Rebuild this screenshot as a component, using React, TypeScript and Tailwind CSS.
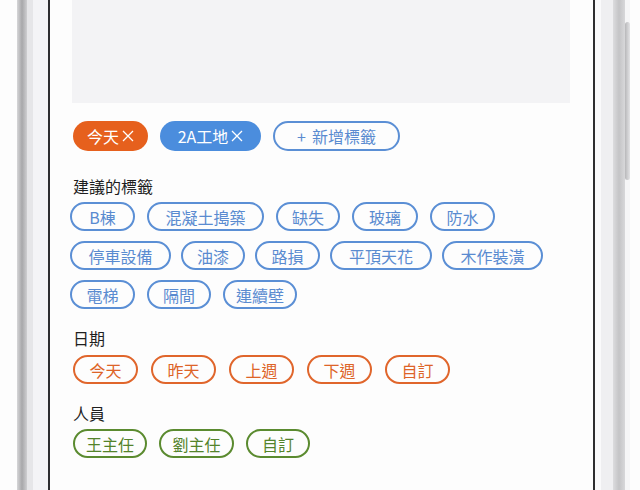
import React from "react";

type Tone = "blue" | "orange" | "green";

const toneClass: Record<Tone, string> = {
  blue: "border-[#5b8fd5] text-[#5a8bd0]",
  orange: "border-[#e0662c] text-[#dd6428]",
  green: "border-[#5b8b30] text-[#54832b]"
};

const suggested: { label: string; w: string }[][] = [
  [
    { label: "B棟", w: "w-[65px]" },
    { label: "混凝土搗築", w: "w-[117px]" },
    { label: "缺失", w: "w-[64px]" },
    { label: "玻璃", w: "w-[66px]" },
    { label: "防水", w: "w-[65px]" }
  ],
  [
    { label: "停車設備", w: "w-[101px]" },
    { label: "油漆", w: "w-[64px]" },
    { label: "路損", w: "w-[65px]" },
    { label: "平頂天花", w: "w-[102px]" },
    { label: "木作裝潢", w: "w-[101px]" }
  ],
  [
    { label: "電梯", w: "w-[65px]" },
    { label: "隔間", w: "w-[64px]" },
    { label: "連續壁", w: "w-[74px]" }
  ]
];

const dates = ["今天", "昨天", "上週", "下週", "自訂"];

const people = [
  { label: "王主任", w: "w-[74px]" },
  { label: "劉主任", w: "w-[75px]" },
  { label: "自訂", w: "w-[64px]" }
];

function Pill({ label, tone, w }: { label: string; tone: Tone; w: string }) {
  return (
    <div
      className={`flex h-[29px] ${w} shrink-0 items-center justify-center rounded-full border-2 text-[16px] ${toneClass[tone]}`}
    >
      {label}
    </div>
  );
}

function Cross() {
  return (
    <svg width="12" height="12" viewBox="0 0 12 12" className="ml-[3px]">
      <path d="M1 1L11 11M11 1L1 11" stroke="white" strokeWidth="1.3" />
    </svg>
  );
}

function Label({ children }: { children: React.ReactNode }) {
  return <p className="h-5 text-[16px] leading-5 text-[#1f1f1f]">{children}</p>;
}

export default function App() {
  return (
    <div
      className="flex h-[490px] w-[640px] overflow-hidden bg-[#fcfcfd]"
      style={{ fontFamily: '"Noto Sans CJK TC", "Noto Sans", sans-serif' }}
    >
      {/* left side of the device */}
      <div className="w-[17px] shrink-0 bg-[#fdfdfd]" />
      <div className="w-[10px] shrink-0 bg-gradient-to-r from-[#d6d6d8] via-[#a8a8aa] to-[#cfcfd1]" />
      <div className="w-[6px] shrink-0 bg-[#e6e6e8]" />
      <div className="w-[15px] shrink-0 bg-[#f4f4f6]" />
      <div className="w-[2px] shrink-0 bg-[#2e2e30]" />

      {/* screen */}
      <div className="w-[543px] shrink-0 bg-[#fdfdfd] pl-[22px] pr-[23px]">
        <div className="h-[103px] bg-[#f3f3f5]" />

        <div className="mt-[18px] flex gap-3 pl-[1px] text-[16px]">
          <div className="flex h-[30px] w-[75px] items-center justify-center rounded-full bg-[#e6601d] text-white">
            今天
            <Cross />
          </div>
          <div className="flex h-[30px] w-[101px] items-center justify-center rounded-full bg-[#4b8ddd] text-white">
            2A工地
            <Cross />
          </div>
          <div className="flex h-[30px] w-[127px] items-center justify-center gap-[6px] rounded-full border-2 border-[#5b8fd5] text-[#5a8bd0]">
            <span>+</span>
            <span>新增標籤</span>
          </div>
        </div>

        <div className="mt-[25px] pl-[1px]">
          <Label>建議的標籤</Label>
        </div>
        <div className="ml-[-2px] mt-[6px] flex flex-col gap-[10px]">
          {suggested.map((row, i) => (
            <div key={i} className={`flex ${i === 1 ? "gap-[10px]" : "gap-3"}`}>
              {row.map((t) => (
                <Pill key={t.label} label={t.label} tone="blue" w={t.w} />
              ))}
            </div>
          ))}
        </div>

        <div className="mt-[19px] pl-[1px]">
          <Label>日期</Label>
        </div>
        <div className="mt-[7px] flex gap-[13px] pl-[1px]">
          {dates.map((d) => (
            <Pill key={d} label={d} tone="orange" w="w-[65px]" />
          ))}
        </div>

        <div className="mt-[19px] pl-[1px]">
          <Label>人員</Label>
        </div>
        <div className="mt-[6px] flex gap-3 pl-[1px]">
          {people.map((p) => (
            <Pill key={p.label} label={p.label} tone="green" w={p.w} />
          ))}
        </div>
      </div>

      {/* right side of the device */}
      <div className="w-[2px] shrink-0 bg-[#2e2e30]" />
      <div className="w-[6px] shrink-0 bg-[#fafafb]" />
      <div className="w-[12px] shrink-0 bg-[#efeff1]" />
      <div className="w-[12px] shrink-0 bg-gradient-to-r from-[#dcdcde] via-[#c4c4c6] to-[#d8d8da]" />
      <div className="flex w-[5px] shrink-0 flex-col bg-[#f6f6f7]">
        <div className="mt-[22px] h-[158px] rounded-sm bg-gradient-to-r from-[#b8b8ba] to-[#e4e4e6]" />
      </div>
      <div className="flex-1 bg-[#fdfdfd]" />
    </div>
  );
}
